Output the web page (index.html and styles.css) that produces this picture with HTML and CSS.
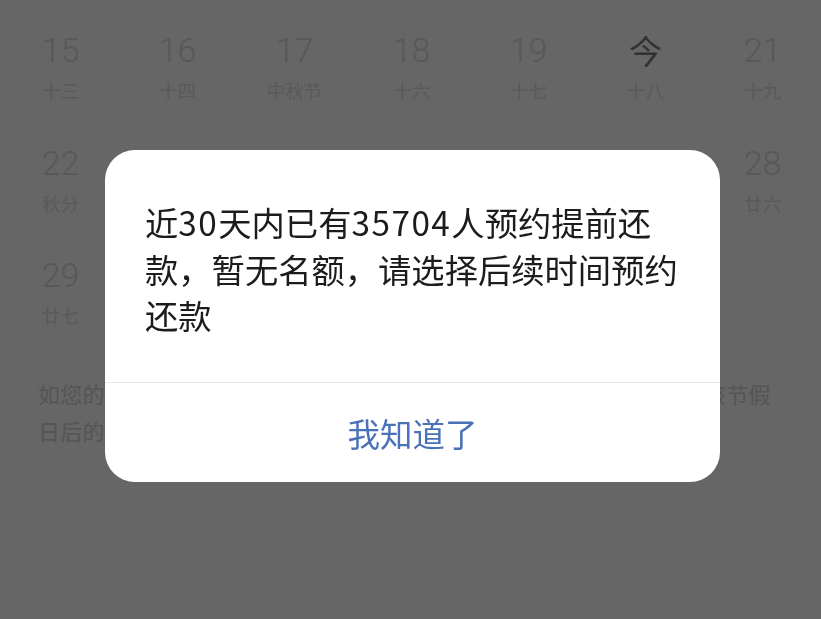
FILE: index.html
```html
<!DOCTYPE html>
<html lang="zh-CN">
<head>
<meta charset="utf-8">
<title>预约提前还款</title>
<link rel="stylesheet" href="styles.css">
</head>
<body>
<div class="page">
  <div class="calendar">
    <div class="day"><span class="num">15</span><span class="lunar">十三</span></div>
    <div class="day"><span class="num">16</span><span class="lunar">十四</span></div>
    <div class="day"><span class="num">17</span><span class="lunar">中秋节</span></div>
    <div class="day"><span class="num">18</span><span class="lunar">十六</span></div>
    <div class="day"><span class="num">19</span><span class="lunar">十七</span></div>
    <div class="day today"><span class="num">今</span><span class="lunar">十八</span></div>
    <div class="day"><span class="num">21</span><span class="lunar">十九</span></div>

    <div class="day"><span class="num">22</span><span class="lunar">秋分</span></div>
    <div class="day"><span class="num">23</span><span class="lunar">廿一</span></div>
    <div class="day"><span class="num">24</span><span class="lunar">廿二</span></div>
    <div class="day"><span class="num">25</span><span class="lunar">廿三</span></div>
    <div class="day"><span class="num">26</span><span class="lunar">廿四</span></div>
    <div class="day"><span class="num">27</span><span class="lunar">廿五</span></div>
    <div class="day"><span class="num">28</span><span class="lunar">廿六</span></div>

    <div class="day"><span class="num">29</span><span class="lunar">廿七</span></div>
    <div class="day"><span class="num">30</span><span class="lunar">廿八</span></div>
  </div>
  <p class="note">如您的预约还款日期恰逢周末或法定节假日，提前还款申请将顺延至该节假日后的第一个工作日办理。</p>
</div>

<div class="mask">
  <div class="dialog">
    <div class="dialog-body">近<span class="digits">30</span>天内已有<span class="digits">35704</span>人预约提前还款，暂无名额，请选择后续时间预约还款</div>
    <div class="dialog-footer">我知道了</div>
  </div>
</div>
</body>
</html>
```

FILE: styles.css
```css
html, body {
  margin: 0;
  padding: 0;
}

body {
  width: 821px;
  height: 619px;
  overflow: hidden;
  background: #ffffff;
  font-family: "Noto Sans CJK SC", "Noto Sans", sans-serif;
}

.page {
  padding-left: 2px;
}

.calendar {
  display: grid;
  grid-template-columns: repeat(7, 1fr);
  grid-auto-rows: 112.5px;
}

.day {
  display: flex;
  flex-direction: column;
  align-items: center;
  padding-top: 30px;
}

.num {
  font-family: "Roboto", "Noto Sans CJK SC", sans-serif;
  font-weight: 300;
  font-size: 34px;
  line-height: 40px;
  color: #dcdcdc;
}

.lunar {
  margin-top: 10px;
  font-size: 18.5px;
  line-height: 20px;
  color: #e0e0e0;
}

.today .num {
  font-family: "Noto Sans CJK SC", sans-serif;
  font-weight: 400;
  font-size: 33px;
  color: #7c7c7c;
}

.note {
  margin: 37px 0 0 0;
  padding: 0 30px 0 36px;
  font-size: 22px;
  letter-spacing: 0.2px;
  line-height: 37px;
  color: #d4d4d4;
}

.mask {
  position: fixed;
  inset: 0;
  background: rgba(0, 0, 0, 0.6);
  display: flex;
  align-items: flex-start;
  padding: 150px 0 0 105px;
}

.dialog {
  width: 615px;
  background: #ffffff;
  border-radius: 30px;
  overflow: hidden;
}

.dialog-body {
  padding: 49px 36px 43px 40px;
  font-size: 33.3px;
  line-height: 46.5px;
  color: #1c1c1e;
}

.digits {
  letter-spacing: 1.5px;
}

.dialog-footer {
  border-top: 1px solid #e8e8e8;
  height: 99px;
  display: flex;
  align-items: center;
  justify-content: center;
  font-size: 32.5px;
  color: #4a72b6;
}
```
